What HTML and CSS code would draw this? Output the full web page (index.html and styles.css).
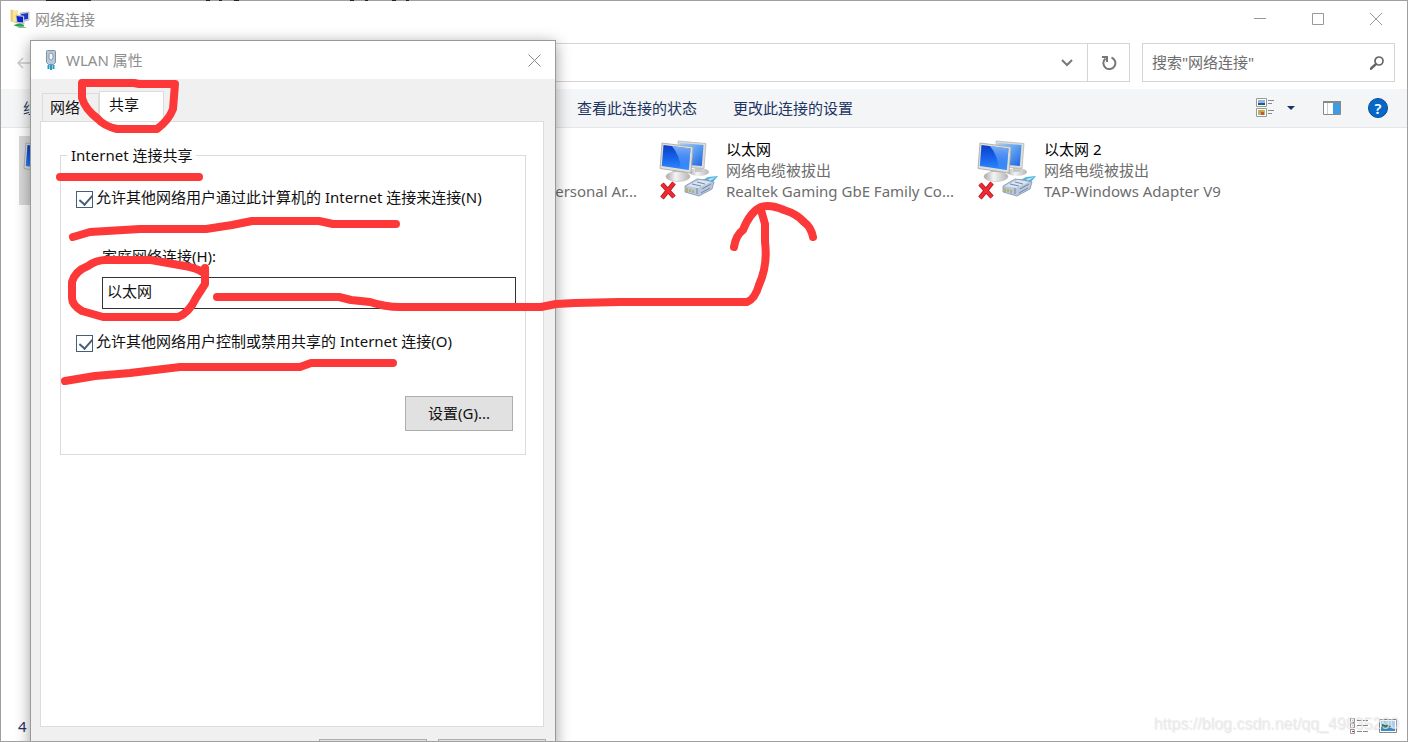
FILE: index.html
```html
<!DOCTYPE html>
<html lang="zh-CN">
<head>
<meta charset="utf-8">
<title>网络连接</title>
<link rel="stylesheet" href="styles.css">
</head>
<body>
<svg class="defs" width="0" height="0" aria-hidden="true">
  <defs>
    <linearGradient id="screen" x1="0" y1="0" x2="0" y2="1"><stop offset="0" stop-color="#0a3fc4"/><stop offset=".5" stop-color="#1660ea"/><stop offset="1" stop-color="#2f8bfb"/></linearGradient>
    <linearGradient id="screen-back" x1="0" y1="0" x2="1" y2="1"><stop offset="0" stop-color="#a6d0f8"/><stop offset=".5" stop-color="#5a9ff0"/><stop offset="1" stop-color="#1e62e0"/></linearGradient>
    <linearGradient id="gloss" x1="0" y1="0" x2="0" y2="1"><stop offset="0" stop-color="#9ccbff" stop-opacity=".8"/><stop offset="1" stop-color="#4d9cff" stop-opacity=".2"/></linearGradient>
    <linearGradient id="stand" x1="0" y1="0" x2="1" y2="0"><stop offset="0" stop-color="#a9a9a9"/><stop offset=".4" stop-color="#f4f4f4"/><stop offset="1" stop-color="#b5b5b5"/></linearGradient>
    <symbol id="monitors" viewBox="0 0 60 62">
      <ellipse cx="40" cy="33" rx="10" ry="4" fill="url(#stand)"/>
      <path d="M36 25h7l1 8h-8z" fill="#c8c8c8"/>
      <path d="M19 2l28 2.500-2 25-24-2z" fill="#dcdcda" stroke="#b2b2b2" stroke-width=".7"/>
      <path d="M21 4l23.500 2-1.700 21-20-1.500z" fill="url(#screen-back)"/>
      <path d="M14 30h11l2 7H13z" fill="#bdbdbd"/>
      <ellipse cx="19" cy="37.500" rx="12" ry="5" fill="url(#stand)" stroke="#b4b4b4" stroke-width=".5"/>
      <path d="M3 4l31 4-2 26-31-4.500z" fill="#dededb" stroke="#a4a4a4" stroke-width=".8"/>
      <path d="M4.500 6l27 3.500-1.700 21.500-27-4z" fill="url(#screen)"/>
      <path d="M13 7l18.500 2.500-1.700 21.500-8-1.300q-1-13-8.800-22.700z" fill="url(#gloss)"/>
    </symbol>
    <symbol id="unplugged" viewBox="0 0 60 62">
      <use href="#monitors"/>
      <path d="M42 42l7-4 10-1-5 6-6 3z" fill="#54b4dc"/>
      <path d="M49 40l8-2-6 4z" fill="#b4e8f8"/>
      <path d="M26 47l12-7 9 1 8 2-2 7-13 7-14-4z" fill="#b9c7dc" stroke="#8193ad" stroke-width=".8"/>
      <path d="M28 47l11 2 13-6-12-2z" fill="#dbe6f2"/>
      <path d="M38 49v6M33 45l9 2M38 43l8 2M43 50l9-5M42 54l9-5" fill="none" stroke="#7187a3" stroke-width="1"/>
      <path d="M28 49v4M31 50v3M34 51v3" stroke="#b0aa50" stroke-width="1.500"/>
      <path d="M3 45l12 13M15 44L3 59" stroke="#b3141c" stroke-width="4.500"/>
      <path d="M3 45l12 13M15 44L3 59" stroke="#ee2a32" stroke-width="3"/>
    </symbol>
  </defs>
</svg>
<main class="window">
  <header class="titlebar">
    <svg class="app-icon" viewBox="0 0 20 20" width="20" height="20"><path d="M1 1l6 2v11l-6-2z" fill="#f0d377" stroke="#d5b85b" stroke-width=".6"/><path d="M3 2l5-1v11l-5 1z" fill="#fbe798"/><path d="M10 4l9-1v8l-8 2z" fill="#ddd" stroke="#999" stroke-width=".6"/><path d="M11 5l7-1v6l-6 1z" fill="#1839c9"/><path d="M6 6l8 1v8l-7-1z" fill="#ddd" stroke="#999" stroke-width=".5"/><path d="M6.500 7l6.500 .8v5.700l-5.500-.5z" fill="#0d1fd0"/><path d="M4 16q6-3 10 0v1.500q-6 1-10-1z" fill="#23a94b"/><path d="M8 18.500h8" stroke="#aaa"/></svg>
    <h1 class="title">网络连接</h1>
    <div class="window-controls">
      <button class="caption" aria-label="最小化"><svg width="12" height="12"><path d="M0 5.500h12" stroke="#999"/></svg></button>
      <button class="caption" aria-label="最大化"><svg width="12" height="12"><path d="M.5.500h11v11H.5z" fill="none" stroke="#999"/></svg></button>
      <button class="caption" aria-label="关闭"><svg width="12" height="12"><path d="M0 0l12 12M12 0L0 12" stroke="#999"/></svg></button>
    </div>
  </header>
  <nav class="navigation">
    <button class="back" aria-label="后退"><svg width="16" height="12"><path d="M1 6h15M6 1L1 6l5 5" fill="none" stroke="#ccc" stroke-width="1.500"/></svg></button>
    <div class="address">
      <button class="history" aria-label="地址"><svg width="12" height="8"><path d="M1 1l5 5 5-5" fill="none" stroke="#777" stroke-width="2"/></svg></button>
      <button class="refresh" aria-label="刷新"><svg width="16" height="16"><path d="M10.500 2.500a6 6 0 1 1-6 1" fill="none" stroke="#777" stroke-width="2"/><path d="M1 2h5v5" fill="none" stroke="#777" stroke-width="2"/></svg></button>
    </div>
    <label class="search"><input type="search" placeholder='搜索"网络连接"' aria-label="搜索网络连接"><svg width="14" height="14"><circle cx="9" cy="5" r="4" fill="none" stroke="#666" stroke-width="1.700"/><path d="M6 8l-6 5.500" stroke="#666" stroke-width="2.500"/></svg></label>
  </nav>
  <div class="toolbar">
    <button class="command organize">组织</button>
    <button class="command">查看此连接的状态</button>
    <button class="command">更改此连接的设置</button>
    <div class="view-tools">
      <button class="tool" aria-label="更改视图"><svg width="40" height="20"><path d="M.5.500h10v8H.5zM.5 10.500h10v8H.5z" fill="#fff" stroke="#999"/><path d="M2 2h7v3H2z" fill="#8ab9e8"/><path d="M2 5h7v2H2z" fill="#265c76"/><path d="M2 12h7v5H2z" fill="#9cc46f"/><path d="M3 12h4v3H3z" fill="#df9b34"/><path d="M5 14h3v3H5z" fill="#c4543a"/><path d="M12 2.500h6M12 5.500h4M12 12.500h6M12 15.500h4" stroke="#888"/><path d="M31 8h8l-4 4z" fill="#15346c"/></svg></button>
      <button class="tool" aria-label="预览窗格"><svg width="18" height="14"><path d="M.5.500h17v13H.5z" fill="#fff" stroke="#888"/><path d="M0 1h18" stroke="#888" stroke-width="2"/><path d="M10 2h7v11h-7z" fill="#3c9ce6"/><path d="M4.500 2v11" stroke="#ccc"/></svg></button>
      <button class="tool help" aria-label="帮助">?</button>
    </div>
  </div>
  <section class="connections">
    <article class="connection selected"><svg class="connection-icon"><use href="#monitors"/></svg></article>
    <article class="connection"><svg class="connection-icon"><use href="#monitors"/></svg><div class="details trailing"><p>Personal Ar...</p></div></article>
    <article class="connection"><svg class="connection-icon"><use href="#unplugged"/></svg><div class="details"><h2>以太网</h2><p>网络电缆被拔出</p><p>Realtek Gaming GbE Family Co...</p></div></article>
    <article class="connection"><svg class="connection-icon"><use href="#unplugged"/></svg><div class="details"><h2>以太网 2</h2><p>网络电缆被拔出</p><p>TAP-Windows Adapter V9</p></div></article>
  </section>
  <footer class="status">
    <span>4</span>
    <div class="status-tools">
      <button class="tool" aria-label="详细信息"><svg width="19" height="16"><path d="M.5.500h4v4h-4zM.5 5.500h4v4h-4zM.5 11.500h4v4h-4z" fill="#fff" stroke="#999"/><path d="M2 2h1v1H2z" fill="#36c"/><path d="M2 7h1v1H2z" fill="#b84"/><path d="M2 13h2v1H2z" fill="#c22"/><path d="M7 2.500h12M7 7.500h12M7 13.500h12" stroke="#888" stroke-dasharray="5 1"/></svg></button>
      <button class="tool" aria-label="大图标"><svg width="18" height="14"><path d="M.5.500h17v13H.5z" fill="#fff" stroke="#888"/><path d="M2 2h14v10H2z" fill="#a9d2f6"/><path d="M2 8h5l5 1h4v3H2z" fill="#3d8fc4"/><path d="M3 5h5l4 3-9 1z" fill="#41745c"/></svg></button>
    </div>
  </footer>
  <div class="watermark">https://blog.csdn.net/qq_49835290</div>

  <section class="dialog" role="dialog" aria-labelledby="dialog-title">
    <header class="dialog-titlebar">
      <svg width="12" height="20"><path d="M1.500 1.500q0-1 1-1h7q1 0 1 1v11l-2 2h-5l-2-2z" fill="#b8c8d8" stroke="#7d92a5"/><rect x="4" y="3" width="4" height="7" rx="2" fill="#eef5fa" stroke="#8598aa"/><path d="M3.500 15v4M6 15v5M8.500 15v4" stroke="#2699c5" stroke-width="2"/></svg>
      <h2 class="title" id="dialog-title">WLAN 属性</h2>
      <button class="dialog-close" aria-label="关闭"><svg width="13" height="13"><path d="M.5.500l12 12M12.500.500l-12 12" stroke="#888"/></svg></button>
    </header>
    <div class="dialog-body">
      <div class="tabs" role="tablist"><button class="tab" role="tab">网络</button><button class="tab active" role="tab" aria-selected="true">共享</button></div>
      <div class="panel" role="tabpanel">
        <fieldset class="group">
          <legend>Internet 连接共享</legend>
          <label class="check"><input type="checkbox" checked><span>允许其他网络用户通过此计算机的 Internet 连接来连接(N)</span></label>
          <div class="field"><label for="home">家庭网络连接(H):</label><input id="home" type="text" value="以太网"></div>
          <label class="check"><input type="checkbox" checked><span>允许其他网络用户控制或禁用共享的 Internet 连接(O)</span></label>
          <button class="settings">设置(G)...</button>
        </fieldset>
      </div>
      <div class="actions"><button aria-label="确定"></button><button aria-label="取消"></button></div>
    </div>
  </section>
</main>
<svg class="ink" width="1408" height="742" viewBox="0 0 1408 742" aria-hidden="true">
  <path class="edge" d="M46 .5H91M206 .5h4M219 .5h3M234 .5h5M350 .5h4M365 .5h3M392 .5h4M406 .5h3"/>
  <path d="M83 83H134L139 84H175L173 109Q169 120 157 129H117Q104 126 98 119Q85 109 82 98V83"/>
  <path d="M60 177H199"/>
  <path d="M73 237L90 232L140 229H206L232 225L252 221H319L333 224H396"/>
  <path d="M205 268V284L196 298Q189 313 178 317H103L82 311Q72 305 72 298V282Q75 271 88 266Q96 260 106 260H151L179 265Q199 268 205 274"/>
  <path d="M217 297H339L351 300L370 302Q385 307 400 307H541L556 304L575 303L620 302H747Q755 299 759 285Q768 265 765 242V224L761 210"/>
  <path d="M734 247Q736 235 743 230Q750 212 761 207Q770 204 784 210Q797 214 804 222Q811 227 813 237"/>
  <path d="M65 381L95 376L130 373L180 367H300L311 363H393"/>
</svg>
</body>
</html>
```
FILE: styles.css
```css
* { box-sizing: border-box; }
body { position: relative; margin: 0; color: #111; font: 15px/21px "Noto Sans", "Noto Sans CJK SC", sans-serif; }
button, input { font: inherit; color: inherit; }
button { display: flex; align-items: center; justify-content: center; padding: 0; border: 0; background: none; }
h1, h2, p { margin: 0; font-size: 15px; font-weight: 400; }
svg { display: block; flex: none; }
.defs { position: absolute; }
.window { position: relative; display: flex; flex-direction: column; min-width: 1100px; height: 100vh; overflow: hidden; background: #fff; border: 1px solid #a0a0a0; }
.titlebar { display: flex; align-items: center; height: 36px; padding: 0 2px 0 9px; flex: none; }
.title { color: #8f8f8f; margin-left: 5px; white-space: nowrap; }
.window-controls { display: flex; margin-left: auto; }
.caption { width: 58px; height: 36px; }
.navigation { display: flex; height: 39px; margin-top: 6px; padding: 0 12px 0 16px; flex: none; }
.back { width: 60px; justify-content: flex-start; }
.address { display: flex; flex: 1; border: 1px solid #d5d5d5; }
.history { width: 40px; margin-left: auto; }
.refresh { width: 42px; border-left: 1px solid #d5d5d5; }
.search { display: flex; align-items: center; width: 253px; margin-left: 12px; padding: 0 10px 0 9px; border: 1px solid #d5d5d5; }
.search input { flex: 1; min-width: 0; padding: 0; border: 0; outline: 0; background: none; }
.search input::placeholder { color: #6d6d6d; opacity: 1; }
.toolbar { display: flex; align-items: center; height: 39px; margin-top: 7px; padding: 0 19px 0 22px; flex: none; background: #f4f5f7; border-bottom: 1px solid #e3e5e8; color: #1c3663; }
.command { margin-right: 36px; white-space: nowrap; }
.organize { width: 518px; justify-content: flex-start; }
.view-tools { display: flex; align-items: center; gap: 27px; margin-left: auto; }
.help { width: 20px; height: 20px; border: 1px solid #064d94; border-radius: 50%; background: #0568c8; color: #fff; font-weight: 600; }
.connections { display: grid; grid-template-columns: repeat(auto-fill, 312px); column-gap: 6px; align-content: start; flex: 1; padding: 8px 18px; }
.connection { display: flex; gap: 7px; height: 69px; padding: 3px 4px; }
.selected { background: #d9d9d9; }
.connection-icon { width: 60px; height: 62px; }
.details { min-width: 0; color: #6d6d6d; white-space: nowrap; }
.details h2 { height: 21px; color: #000; }
.details p { height: 21px; }
.trailing { align-self: flex-end; margin-left: auto; padding-right: 8px; }
.status { display: flex; align-items: center; justify-content: space-between; height: 30px; padding: 0 10px 0 17px; flex: none; color: #1c3663; }
.status-tools { display: flex; gap: 10px; align-items: center; }
.watermark { position: absolute; right: 8px; bottom: 6px; color: rgba(236, 236, 236, .75); font: 16px/22px "Liberation Sans", sans-serif; text-shadow: 1px 1px 1px rgba(0, 0, 0, .1); }
.dialog { position: absolute; top: 39px; bottom: -45px; left: 29px; display: flex; flex-direction: column; width: 526px; background: #f0f0f0; border: 1px solid #999; box-shadow: 0 3px 14px rgba(0, 0, 0, .38); }
.dialog-titlebar { display: flex; align-items: center; height: 38px; padding: 0 14px; background: #fff; }
.dialog-titlebar .title { margin-left: 9px; }
.dialog-close { margin-left: auto; }
.dialog-body { display: flex; flex: 1; flex-direction: column; padding: 12px 9px; }
.tabs { display: flex; align-items: flex-end; height: 30px; padding-left: 2px; }
.tab { width: 57px; height: 28px; justify-content: flex-start; padding-left: 7px; border: 1px solid #dcdcdc; border-bottom: 0; }
.active { width: 65px; height: 30px; padding-left: 9px; padding-bottom: 4px; background: #fff; }
.panel { flex: 1; margin-right: 2px; padding: 22px 17px 0 19px; border: 1px solid #dcdcdc; background: #fff; }
.group { margin: 0; padding: 21px 12px 23px 15px; border: 1px solid #dcdcdc; min-width: 0; }
.group legend { margin-left: -9px; padding: 0 4px; line-height: 22px; }
.check { display: flex; gap: 3px; height: 26px; white-space: nowrap; }
.check input { appearance: none; width: 17px; height: 17px; margin: 4px 0 0; border: 1px solid #465f78; background: #fff; }
.check input::before { content: ""; display: block; width: 6px; height: 11px; margin: 0 0 0 5px; border: solid #465f78; border-width: 0 2px 2px 0; rotate: 42deg; }
.field { display: flex; flex-direction: column; gap: 10px; margin: 33px -3px 22px 26px; }
.field input { width: 100%; height: 32px; padding: 0 4px 5px; border: 1px solid #333; background: #fff; }
.settings { width: 108px; height: 35px; margin: 39px 0 0 auto; border: 1px solid #adadad; background: #e1e1e1; }
.actions { display: flex; justify-content: flex-end; gap: 11px; padding-top: 12px; }
.actions button { width: 108px; height: 34px; border: 1px solid #adadad; background: #e1e1e1; }
.ink { position: absolute; top: 0; left: 0; fill: none; stroke: #fc3838; stroke-width: 8; stroke-linecap: round; stroke-linejoin: round; pointer-events: none; }
.edge { stroke: #222; stroke-width: 1; stroke-linecap: butt; }
```
